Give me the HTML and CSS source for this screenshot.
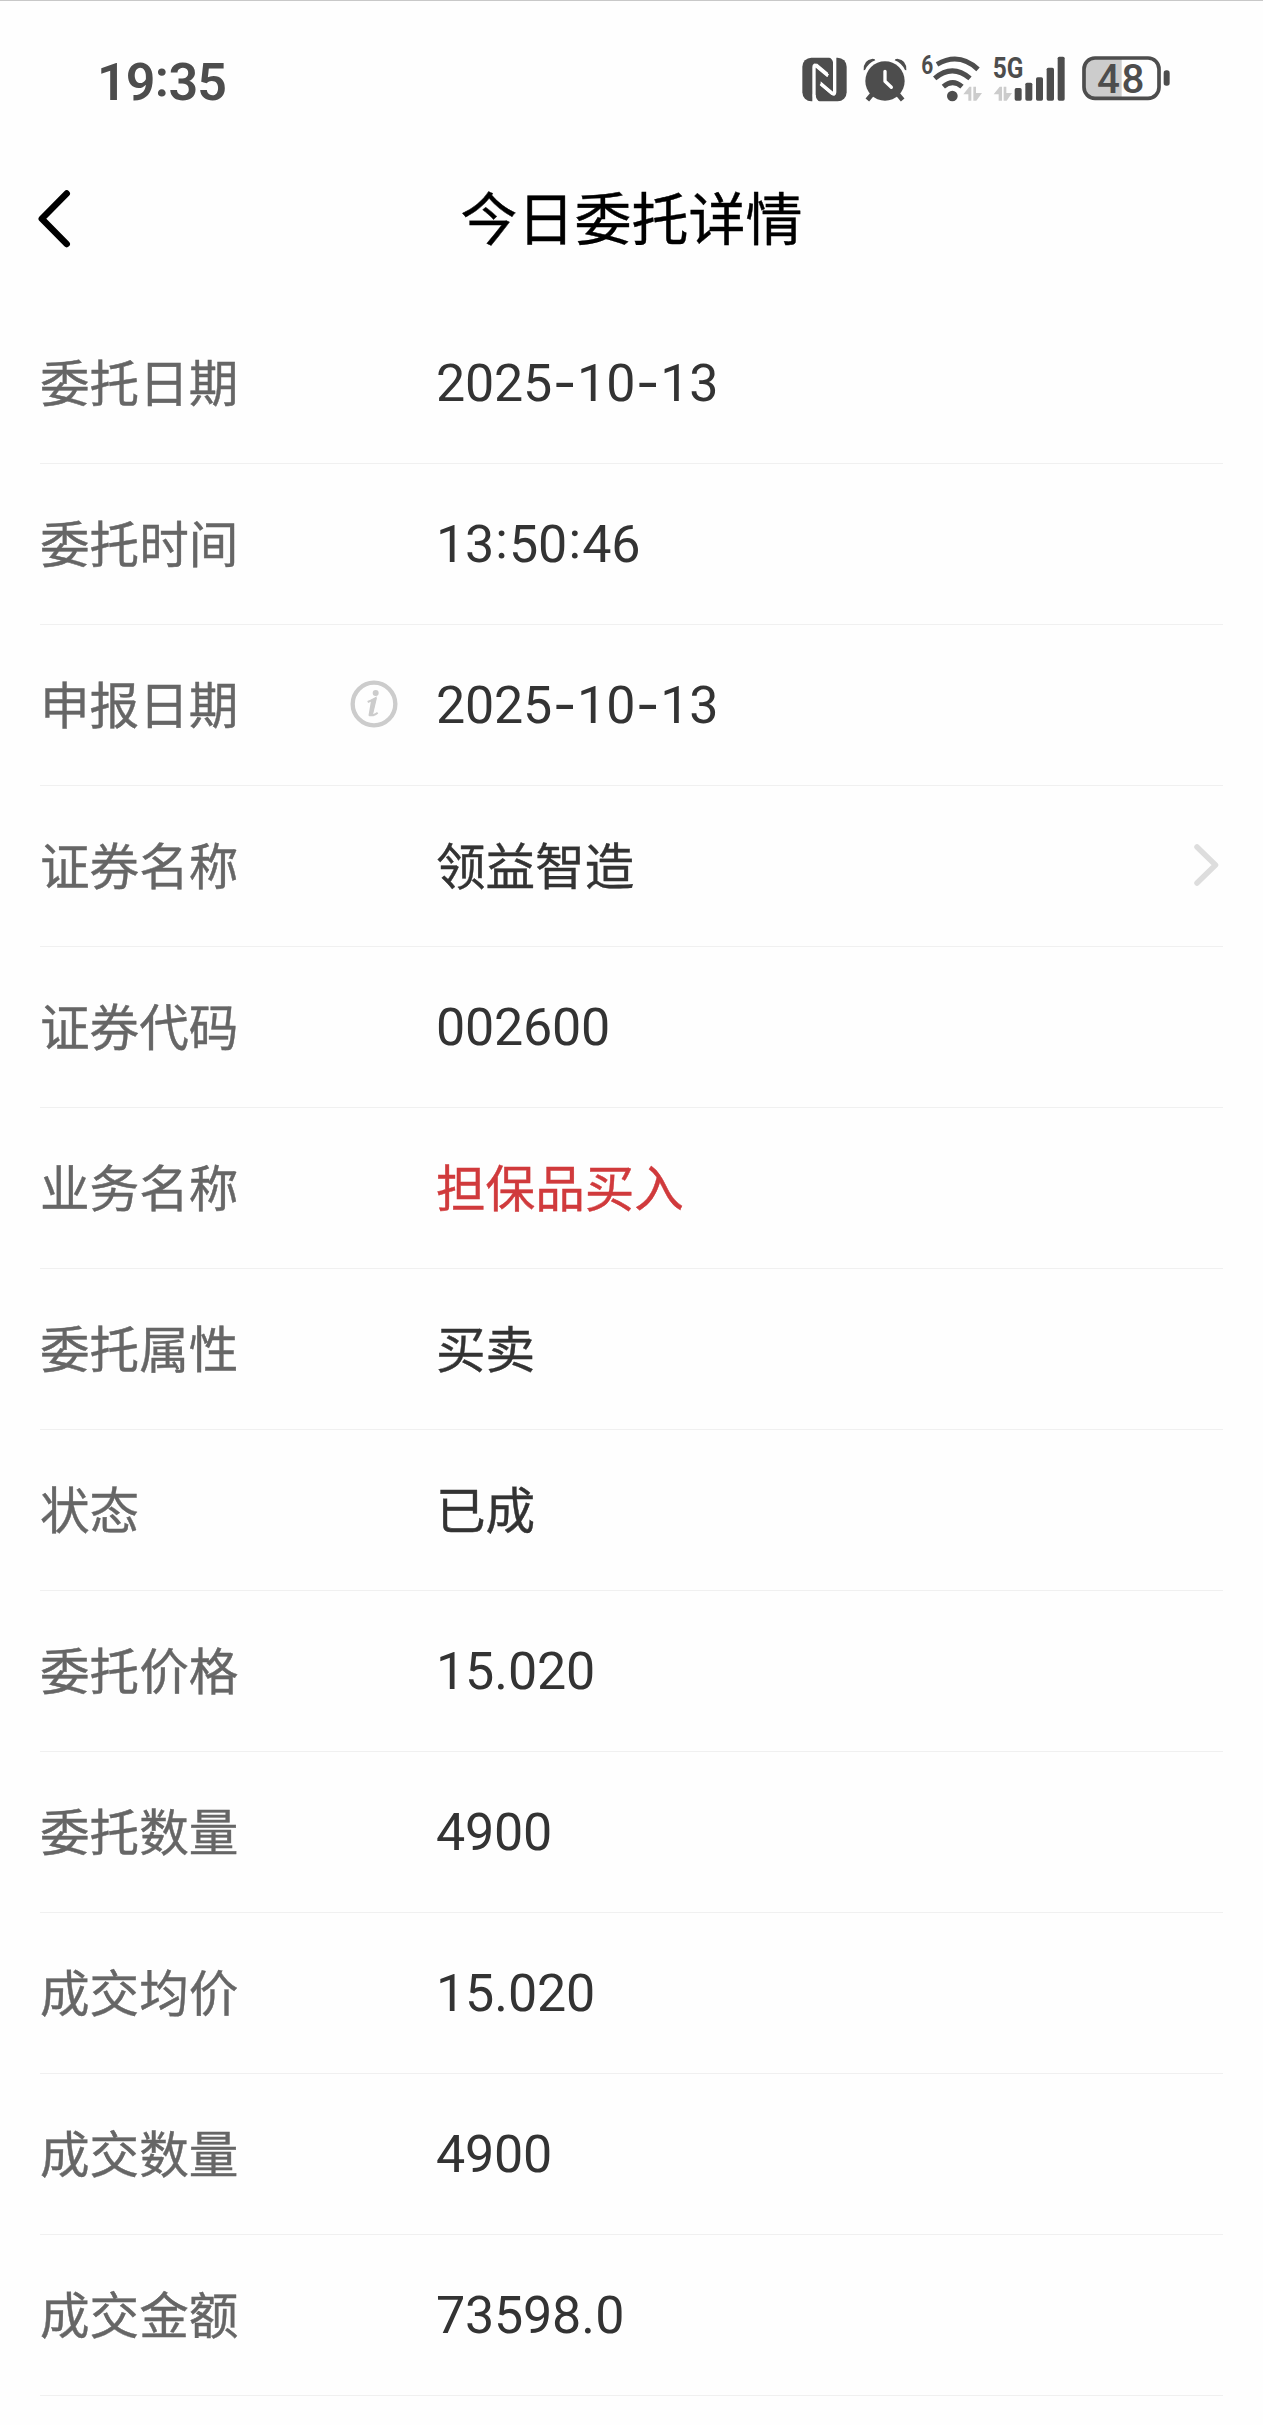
FILE: index.html
```html
<!DOCTYPE html>
<html lang="zh-CN">
<head>
<meta charset="utf-8">
<title>今日委托详情</title>
<link rel="stylesheet" href="styles.css">
</head>
<body>
<div class="status-bar">
  <div class="clock">19<span class="colon">:</span>35</div>
  <div class="status-icons">
    <svg class="nfc" width="45" height="50" viewBox="66 70 135 150">
      <rect x="67" y="84" width="133" height="131" rx="27" fill="#4d4d4d"/>
      <path d="M102 217V112Q102 103 109 109L144 138M164 82V188Q164 196 157 191L122 162" fill="none" stroke="#fff" stroke-width="10"/>
      <path d="M107 112L144 142V129L110 101Z M159 189L122 155V168L155 196Z" fill="#fff"/>
      <path d="M144 80H158Q168 86 168 100L159 98Q158 89 144 80Z M108 219H122Q107 210 107 196L98 194Q98 212 108 219Z" fill="#fff"/>
    </svg>
    <svg class="alarm" width="44" height="50" viewBox="249 70 132 150">
      <circle cx="315" cy="154" r="59" fill="#4d4d4d"/>
      <path d="M277 193L262 211M353 193L368 211" stroke="#4d4d4d" stroke-width="14"/>
      <path d="M251 122Q249 91 278 87Q286 88 286 92Q265 100 255 121ZM379 122Q381 91 352 87Q344 88 344 92Q365 100 375 121Z" fill="#4d4d4d"/>
      <path d="M315 125V155L334 173" fill="none" stroke="#fff" stroke-width="10" stroke-linecap="round" stroke-linejoin="round"/>
    </svg>
    <svg class="wifi" width="61" height="50" viewBox="423 70 183 150">
      <text x="424" y="132" font-size="78" textLength="36" lengthAdjust="spacingAndGlyphs">6</text>
      <g fill="none" stroke="#4d4d4d" stroke-width="15">
        <path d="M471 104Q537 66 594 119"/>
        <path d="M464 146Q517 101 570 146"/>
        <path d="M490 171Q518 147 546 171"/>
      </g>
      <circle cx="517" cy="199" r="16" fill="#4d4d4d"/>
      <path d="M550 194L568 171H574V213H565V194ZM580 171H588V190H606L589 213H580Z" fill="#ccc"/>
    </svg>
    <svg class="signal" width="72" height="50" viewBox="639 70 216 150">
      <text x="638" y="144" font-size="87" textLength="92" lengthAdjust="spacingAndGlyphs">5G</text>
      <path d="M641 194L659 171H666V213H656V194ZM671 171H679V190H696L680 213H671Z" fill="#ccc"/>
      <g fill="#4d4d4d">
        <rect x="704" y="175" width="21" height="38" rx="5"/>
        <rect x="736" y="159" width="21" height="54" rx="5"/>
        <rect x="768" y="143" width="21" height="70" rx="5"/>
        <rect x="800" y="114" width="22" height="99" rx="5"/>
        <rect x="833" y="81" width="21" height="132" rx="5"/>
      </g>
    </svg>
    <svg class="battery" width="88" height="50" viewBox="906 70 264 150">
      <path d="M1025 87H945Q913 87 913 118V174Q913 205 945 205H1025Z" fill="#ccc"/>
      <rect x="912" y="85" width="225" height="121" rx="33" fill="none" stroke="#4d4d4d" stroke-width="11"/>
      <rect x="1151" y="122" width="18" height="46" rx="8" fill="#4d4d4d"/>
      <text class="level" x="951" y="190" font-size="121" textLength="142" lengthAdjust="spacing">48</text>
    </svg>
  </div>
</div>

<header class="nav">
  <svg class="back" width="36" height="60" viewBox="0 0 36 60">
    <path d="M30.7 4.5L5.8 29.8L30.7 55" fill="none" stroke="#000" stroke-width="6.5" stroke-linecap="round" stroke-linejoin="round"/>
  </svg>
  <h1>今日委托详情</h1>
</header>

<main class="details">
  <div class="row"><span class="label">委托日期</span><span class="value">2025<span class="dash">-</span>10<span class="dash">-</span>13</span></div>
  <div class="row"><span class="label">委托时间</span><span class="value">13<span class="colon">:</span>50<span class="colon">:</span>46</span></div>
  <div class="row">
    <span class="label">申报日期
      <svg class="info" width="48" height="48" viewBox="0 0 144 144">
        <circle cx="72" cy="72" r="64" fill="none" stroke="#ccc" stroke-width="13"/>
        <circle cx="77" cy="39" r="9" fill="#ccc"/>
        <path d="M53 66Q68 60 76 55L66 98Q64 108 71 105Q77 103 83 98" fill="none" stroke="#ccc" stroke-width="6"/>
        <path d="M66 60L78 55L66 106H58Z" fill="#ccc" stroke="#ccc" stroke-width="5" stroke-linejoin="round"/>
      </svg>
    </span>
    <span class="value">2025<span class="dash">-</span>10<span class="dash">-</span>13</span>
  </div>
  <div class="row">
    <span class="label">证券名称</span><span class="value text">领益智造</span>
    <svg class="chevron" width="26" height="44" viewBox="0 0 26 44">
      <path d="M4 4L22.5 22L4 40" fill="none" stroke="#ddd" stroke-width="5.5" stroke-linecap="round" stroke-linejoin="round"/>
    </svg>
  </div>
  <div class="row"><span class="label">证券代码</span><span class="value">002600</span></div>
  <div class="row"><span class="label">业务名称</span><span class="value text buy">担保品买入</span></div>
  <div class="row"><span class="label">委托属性</span><span class="value text">买卖</span></div>
  <div class="row"><span class="label">状态</span><span class="value text">已成</span></div>
  <div class="row"><span class="label">委托价格</span><span class="value">15<span class="point">.</span>020</span></div>
  <div class="row"><span class="label">委托数量</span><span class="value">4900</span></div>
  <div class="row"><span class="label">成交均价</span><span class="value">15<span class="point">.</span>020</span></div>
  <div class="row"><span class="label">成交数量</span><span class="value">4900</span></div>
  <div class="row"><span class="label">成交金额</span><span class="value">73598<span class="point">.</span>0</span></div>
</main>
</body>
</html>
```

FILE: styles.css
```css
* { box-sizing: border-box; }

body {
  margin: 0;
  min-height: 2425px;
  background: #fefefe;
  border-top: 1px solid #c8c8c8;
  font-family: Roboto, "Noto Sans CJK SC", sans-serif;
  color: #333;
}

.status-bar {
  display: flex;
  justify-content: space-between;
  height: 135px;
  padding: 52px 93px 0 97px;
}

.clock {
  height: 50px;
  font-size: 52px;
  font-weight: 600;
  line-height: 48px;
  letter-spacing: -1px;
  color: #4d4d4d;
}

.status-icons {
  display: flex;
  height: 50px;
  fill: #4d4d4d;
  font-weight: 700;
}

.status-icons svg { overflow: visible; }

.alarm { margin-left: 16px; }
.wifi { margin-left: 14px; }
.signal { margin-left: 11px; }
.battery { margin-left: 17px; }
.level { font-weight: 500; }

.nav {
  display: grid;
  grid-template-columns: 36px 1fr 36px;
  align-items: center;
  height: 167px;
  padding: 0 36px;
}

.nav h1 {
  margin: 0;
  padding-top: 3px;
  text-align: center;
  font-size: 57px;
  font-weight: 400;
  line-height: 80px;
  color: #000;
  -webkit-text-stroke: 0.4px;
}

.back { margin-top: -1px; }

.details { padding: 0 40px; }

.row {
  display: flex;
  align-items: center;
  height: 161px;
  border-bottom: 1px solid #f0f0f0;
}

.label {
  display: flex;
  align-items: center;
  justify-content: space-between;
  width: 396px;
  padding-top: 3px;
  padding-right: 38px;
  font-size: 49.6px;
  line-height: 72px;
  color: #666;
  -webkit-text-stroke: 0.4px;
}

.info { margin-top: -5px; }

.value {
  flex: 1;
  padding-top: 2px;
  font-size: 52px;
  line-height: 72px;
  letter-spacing: -0.2px;
}

.text {
  padding-top: 3px;
  font-size: 49.6px;
  letter-spacing: 0;
  -webkit-text-stroke: 0.4px;
}

.buy { color: #d03a3c; }

.dash,
.colon,
.point {
  display: inline-block;
  width: 15px;
  line-height: 1;
  text-align: center;
}

.point { width: 14px; }

.dash {
  width: 25px;
  font-family: Inter, sans-serif;
}

.colon { vertical-align: 4px; }

.clock .colon { width: 14px; }

.chevron {
  margin-top: -2px;
  margin-right: 4px;
}
```
